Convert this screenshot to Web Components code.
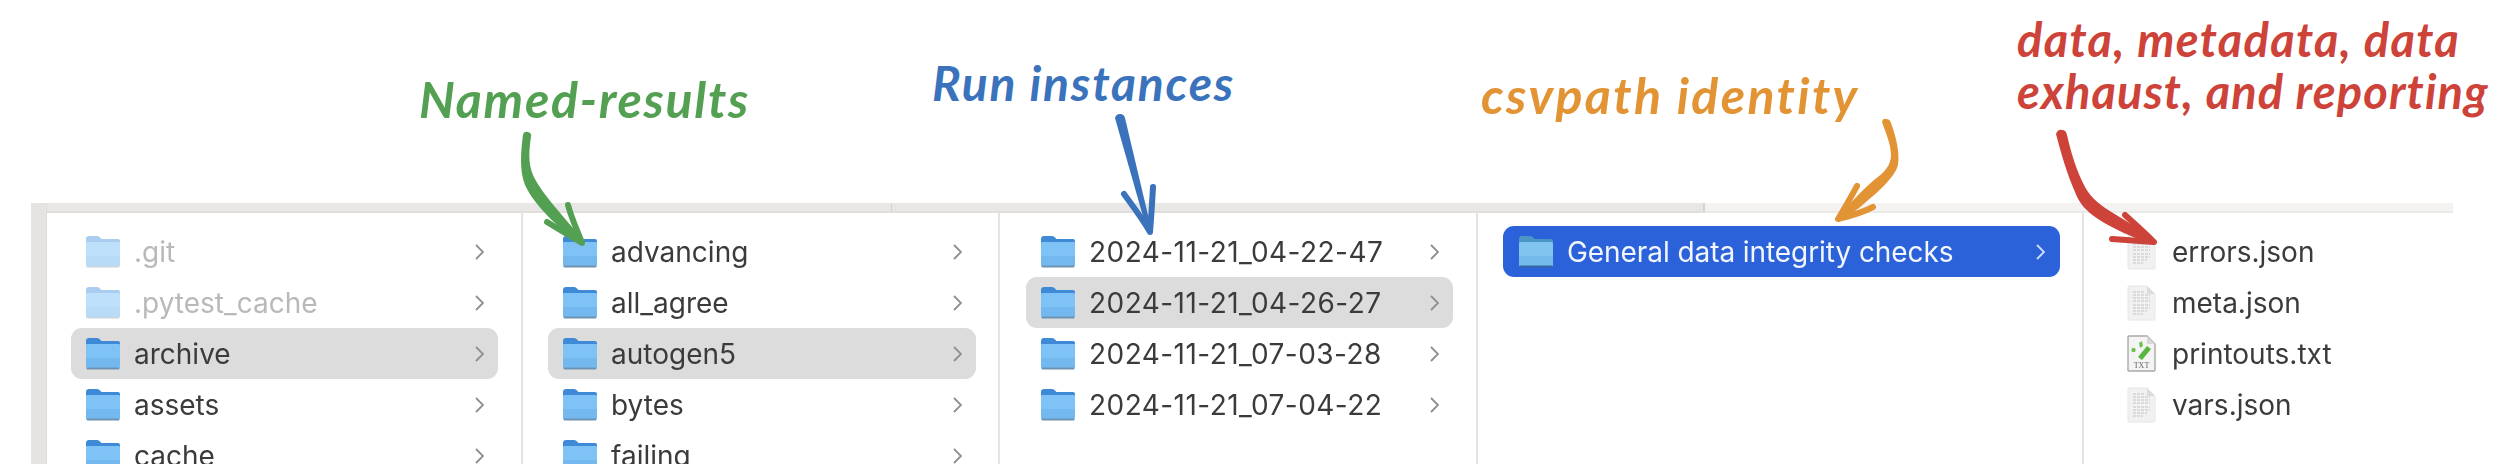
<!DOCTYPE html>
<html>
<head>
<meta charset="utf-8">
<title>Finder columns</title>
<style>
    html, body { margin: 0; background: #ffffff; }
    body { width: 2514px; height: 464px; overflow: hidden; }
</style>
</head>
<body>
<annotated-page>
    <finder-window>
        <finder-column width="476" offset="24" right="23">
            <finder-row kind="folder" label=".git" dim></finder-row>
            <finder-row kind="folder" label=".pytest_cache" dim></finder-row>
            <finder-row kind="folder" label="archive" active></finder-row>
            <finder-row kind="folder" label="assets"></finder-row>
            <finder-row kind="folder" label="cache"></finder-row>
        </finder-column>
        <finder-column width="477" offset="25" right="22">
            <finder-row kind="folder" label="advancing"></finder-row>
            <finder-row kind="folder" label="all_agree"></finder-row>
            <finder-row kind="folder" label="autogen5" active></finder-row>
            <finder-row kind="folder" label="bytes"></finder-row>
            <finder-row kind="folder" label="failing"></finder-row>
        </finder-column>
        <finder-column width="478" offset="26" right="23">
            <finder-row kind="folder" label="2024-11-21_04-22-47" stamp></finder-row>
            <finder-row kind="folder" label="2024-11-21_04-26-27" stamp active></finder-row>
            <finder-row kind="folder" label="2024-11-21_07-03-28" stamp></finder-row>
            <finder-row kind="folder" label="2024-11-21_07-04-22" stamp></finder-row>
        </finder-column>
        <finder-column width="606" offset="25" right="22">
            <finder-row kind="folder" label="General data integrity checks" current></finder-row>
        </finder-column>
        <finder-column width="369" offset="24" right="23" last>
            <finder-row kind="doc" label="errors.json"></finder-row>
            <finder-row kind="doc" label="meta.json"></finder-row>
            <finder-row kind="txt" label="printouts.txt"></finder-row>
            <finder-row kind="doc" label="vars.json"></finder-row>
        </finder-column>
    </finder-window>

    <hand-note x="419" y="69" size="50" spacing="1.7" color="#54a052">Named-results</hand-note>
    <hand-note x="932" y="54" size="48" spacing="1.8" color="#3a72bc">Run instances</hand-note>
    <hand-note x="1481" y="65" size="50" spacing="2.4" color="#e29434">csvpath identity</hand-note>
    <hand-note x="2017" y="11" size="47" spacing="1.3" color="#cd4339">data, metadata, data</hand-note>
    <hand-note x="2017" y="63" size="47" spacing="1.1" color="#cd4339">exhaust, and reporting</hand-note>

    <note-arrows></note-arrows>
</annotated-page>

<script>
class annotatedPage extends HTMLElement {
    constructor() {
        super();
        this.attachShadow({ mode: "open" });
        this.shadowRoot.innerHTML = `
        <style>
            :host {
                display: block;
                position: relative;
                width: 2514px;
                height: 464px;
                padding: 203px 0 0 31px;
                box-sizing: border-box;
                overflow: hidden;
            }
        </style>
        <slot></slot>
        `;
    }
}

class finderWindow extends HTMLElement {
    constructor() {
        super();
        this.attachShadow({ mode: "open" });
        this.shadowRoot.innerHTML = `
        <style>
            :host {
                display: flex;
                width: 2422px;
                height: 261px;
                overflow: hidden;
            }
            .side {
                width: 16px;
                flex: none;
                background: #e5e4e2;
                box-shadow: inset -1px 0 0 #dddcda;
            }
            .main {
                flex: 1;
                display: flex;
                flex-direction: column;
                min-width: 0;
            }
            .head {
                display: flex;
                height: 10px;
                flex: none;
                box-shadow: inset 0 -2px 0 #e0dfdd;
            }
            .head div { height: 100%; }
            .head .one { width: 845px; background: #e8e7e5; box-shadow: inset 0 -2px 0 #e0dfdd, inset -1px 0 0 #d4d3d1; }
            .head .two { width: 813px; background: #e8e7e5; box-shadow: inset 0 -2px 0 #e0dfdd, inset -2px 0 0 #d4d3d1; }
            .head .three { flex: 1; background: #f4f3f1; box-shadow: inset 0 -2px 0 #eaeae8; }
            .cols {
                flex: 1;
                display: flex;
                min-height: 0;
                filter: blur(0.6px);
            }
        </style>
        <div class="side"></div>
        <div class="main">
            <div class="head"><div class="one"></div><div class="two"></div><div class="three"></div></div>
            <div class="cols"><slot></slot></div>
        </div>
        `;
    }
}

class finderColumn extends HTMLElement {
    constructor() {
        super();
        this.attachShadow({ mode: "open" });
    }
    connectedCallback() {
        const width = this.getAttribute("width");
        const offset = this.getAttribute("offset");
        const right = this.getAttribute("right");
        const line = this.hasAttribute("last") ? "none" : "2px solid #e4e4e3";
        this.shadowRoot.innerHTML = `
        <style>
            :host {
                display: flex;
                flex-direction: column;
                flex: none;
                box-sizing: border-box;
                width: ${width}px;
                padding: 13px ${right}px 0 ${offset}px;
                border-right: ${line};
                overflow: hidden;
            }
        </style>
        <slot></slot>
        `;
    }
}

const FOLDER = (strip, top, bottom, edge) => `
    <svg width="34" height="32" viewBox="0 0 34 32">
        <path d="M0 3 Q0 0 3 0 H11 Q13 0 14.5 2 L15.5 3 H32 Q34 3 34 5 V12 H0 Z" fill="${strip}"/>
        <path d="M0 7 Q0 6 1.5 6 H32.5 Q34 6 34 7 V28 Q34 31 31 31 H3 Q0 31 0 28 Z" fill="${top}"/>
        <path d="M0 20 H34 V28 Q34 31 31 31 H3 Q0 31 0 28 Z" fill="${bottom}"/>
        <rect x="0.5" y="29.5" width="33" height="2" rx="1" fill="${edge}"/>
    </svg>`;

const DOC_LINES = `
    <g stroke="#c4c4c4" stroke-width="1.2" stroke-dasharray="3 1">
        <path d="M6 7 H17"/><path d="M6 10 H23"/><path d="M6 13 H23"/><path d="M6 16 H23"/>
        <path d="M6 20 H23"/><path d="M6 23 H23"/><path d="M6 26 H20"/><path d="M6 29 H16"/>
    </g>`;

const ICONS = {
    folder: FOLDER("#3f8ad6", "#7fc3f6", "#73b9f0", "#6c93b4"),
    folderDim: FOLDER("#a9cdee", "#bfe0fa", "#b8dcf8", "#c5d5e2"),
    folderCurrent: FOLDER("#4a97c6", "#80c4f0", "#74baeb", "#33669f"),
    doc: `
    <svg width="29" height="36" viewBox="0 0 29 36">
        <path d="M1 2 Q1 1 2 1 H20 L28 9 V34 Q28 35 27 35 H2 Q1 35 1 34 Z" fill="#f1f1f1" stroke="#e6e6e6"/>
        <path d="M20 1 V9 H28 Z" fill="#dcdcdc"/>
        ${DOC_LINES}
    </svg>`,
    txt: `
    <svg width="29" height="37" viewBox="0 0 29 37">
        <path d="M1 2 Q1 1 2 1 H20 L28 9 V35 Q28 36 27 36 H2 Q1 36 1 35 Z" fill="#f4f4f4" stroke="#a9a9a9" stroke-width="1.4"/>
        <path d="M20 1 V9 H28 Z" fill="#d8d8d8"/>
        <path d="M11 22 L20 11 L24 14 L15 25 Z" fill="#58b63c"/>
        <path d="M12 8 L15 6 L16 11 L13 13 Z" fill="#6cc24a"/>
        <circle cx="6.5" cy="15" r="2.2" fill="#6cc24a"/>
        <text x="14.5" y="33" text-anchor="middle" font-family="Liberation Serif, serif" font-size="8" fill="#666666">TXT</text>
    </svg>`
};

class finderRow extends HTMLElement {
    constructor() {
        super();
        this.attachShadow({ mode: "open" });
    }
    getStyles() {
        return `
        <style>
            :host {
                display: flex;
                align-items: center;
                flex: none;
                box-sizing: border-box;
                height: 51px;
                padding: 0 14px 0 15px;
                border-radius: 11px;
                font-family: "Inter", "Liberation Sans", sans-serif;
                font-size: 28px;
                color: #3b3b3b;
                white-space: nowrap;
            }
            :host([active]) { background: #dcdcdc; }
            :host([current]) { background: #2b62d9; color: #f2f6fd; padding: 0 15px 0 16px; letter-spacing: -0.07px; }
            :host([dim]) { color: #b9b9b9; }
            :host([stamp]) { letter-spacing: 0.45px; }
            :host([kind="doc"]), :host([kind="txt"]) { padding-left: 19px; }
            .icon { display: flex; flex: none; }
            .name { flex: 1; margin-left: 14px; }
            :host([kind="doc"]) .name, :host([kind="txt"]) .name { margin-left: 16px; }
            .more { display: flex; flex: none; }
        </style>
        `;
    }
    connectedCallback() {
        const kind = this.getAttribute("kind");
        let icon = ICONS[kind];
        if (kind === "folder" && this.hasAttribute("dim")) icon = ICONS.folderDim;
        if (kind === "folder" && this.hasAttribute("current")) icon = ICONS.folderCurrent;
        const stroke = this.hasAttribute("current") ? "#d3def6" : "#8f8f8f";
        const more = kind === "folder" ? `
            <span class="more"><svg width="9" height="16" viewBox="0 0 9 16"><path d="M1 1 L8 8 L1 15" fill="none" stroke="${stroke}" stroke-width="1.8"/></svg></span>` : "";
        this.shadowRoot.innerHTML = `
            ${this.getStyles()}
            <span class="icon">${icon}</span>
            <span class="name">${this.getAttribute("label")}</span>
            ${more}
        `;
    }
}

class handNote extends HTMLElement {
    constructor() {
        super();
        this.attachShadow({ mode: "open" });
    }
    connectedCallback() {
        this.shadowRoot.innerHTML = `
        <style>
            :host {
                position: absolute;
                left: ${this.getAttribute("x")}px;
                top: ${this.getAttribute("y")}px;
                font-family: "Lato", "Open Sans", sans-serif;
                font-style: italic;
                font-weight: 700;
                font-size: ${this.getAttribute("size")}px;
                letter-spacing: ${this.getAttribute("spacing")}px;
                line-height: 1.2;
                color: ${this.getAttribute("color")};
                white-space: nowrap;
            }
        </style>
        <slot></slot>
        `;
    }
}

class noteArrows extends HTMLElement {
    constructor() {
        super();
        this.attachShadow({ mode: "open" });
        this.shadowRoot.innerHTML = `
        <style>
            :host { position: absolute; left: 0; top: 0; width: 2514px; height: 464px; pointer-events: none; }
            svg { display: block; }
            .barb { fill: none; stroke-width: 6; stroke-linecap: round; stroke-linejoin: round; }
        </style>
        <svg width="2514" height="464" viewBox="0 0 2514 464">
            <!-- green -->
            <path d="M523 135 Q524 131 528 132 Q532 133 531 137 C529 150 528 163 533 175 C541 193 565 218 585 242 Q584 246 580 245 C560 228 535 207 525 185 C519 170 521 150 523 135 Z" fill="#54a052"/>
            <path class="barb" d="M568 205 C572 220 578 232 582 243 C570 236 560 230 547 222" stroke="#54a052"/>
            <!-- blue -->
            <path d="M1115 118 Q1116 114 1120 114 Q1124 114 1125 118 L1152 232 Q1151 235 1148 234 L1115 118 Z" fill="#3a72bc"/>
            <path class="barb" d="M1153 187 C1152 205 1151 220 1150 232 C1142 218 1132 205 1124 194" stroke="#3a72bc"/>
            <!-- orange -->
            <path d="M1882 122 Q1883 118 1886 119 Q1890 119 1891 123 C1896 137 1900 152 1898 165 C1895 177 1878 192 1866 202 C1857 210 1848 216 1839 222 Q1836 220 1838 217 C1846 208 1860 192 1874 180 C1885 172 1891 165 1891 155 C1891 145 1886 133 1882 122 Z" fill="#e29434"/>
            <path class="barb" d="M1857 186 C1851 197 1845 208 1838 219 C1850 216 1862 213 1873 207" stroke="#e29434"/>
            <!-- red -->
            <path d="M2056 134 Q2058 129 2062 130 Q2066 130 2067 135 C2071 152 2076 170 2085 187 C2091 198 2101 206 2113 213 C2127 221 2143 232 2156 241 Q2157 245 2153 245 C2135 238 2113 229 2098 219 C2086 211 2079 203 2075 192 C2067 174 2061 153 2056 134 Z" fill="#cd4339"/>
            <path class="barb" d="M2125 215 C2135 224 2146 234 2154 242 C2140 241 2126 240 2112 239" stroke="#cd4339"/>
        </svg>
        `;
    }
}

customElements.define("annotated-page", annotatedPage);
customElements.define("finder-window", finderWindow);
customElements.define("finder-column", finderColumn);
customElements.define("finder-row", finderRow);
customElements.define("hand-note", handNote);
customElements.define("note-arrows", noteArrows);
</script>
</body>
</html>
